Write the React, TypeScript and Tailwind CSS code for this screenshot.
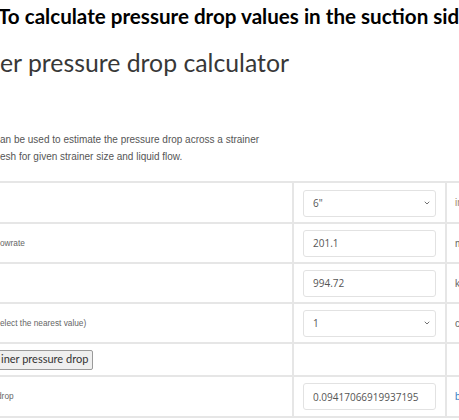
import { ChevronDown } from 'lucide-react';

const inputCls =
    'w-[133px] h-[27px] rounded-[3px] border border-[#e2e2e2] bg-white pl-[9px] text-[10px] text-[#555] font-["Open_Sans",sans-serif] outline-none';

function SelectBox({ value }: { value: string }) {
    return (
        <div className="relative w-[133px]">
            <select
                defaultValue={value}
                className={`${inputCls} appearance-none`}
            >
                <option value={value}>{value}</option>
            </select>
            <ChevronDown
                className="pointer-events-none absolute right-[5px] top-[10px] w-[8px] h-[8px] text-[#555]"
                strokeWidth={2.5}
            />
        </div>
    );
}

function TextBox({ value }: { value: string }) {
    return <input type="text" defaultValue={value} className={inputCls} />;
}

const rows = [
    { h: 'h-[41px]', label: '', labelCls: '', field: <SelectBox value={'6"'} />, unit: 'inch', unitCls: 'text-[#a08a6c]' },
    { h: 'h-[40px]', label: 'owrate', labelCls: '', field: <TextBox value="201.1" />, unit: 'm3/h', unitCls: 'text-[#666]' },
    { h: 'h-[40px]', label: '', labelCls: '', field: <TextBox value="994.72" />, unit: 'kg/m3', unitCls: 'text-[#666]' },
    { h: 'h-[40px]', label: 'elect the nearest value)', labelCls: '', field: <SelectBox value="1" />, unit: 'custom', unitCls: 'text-[#666]' },
    { h: 'h-[33px]', label: null, labelCls: '', field: null, unit: '', unitCls: '' },
    { h: 'h-[41px]', label: 'drop', labelCls: '-ml-[3px]', field: <TextBox value="0.09417066919937195" />, unit: 'bar', unitCls: 'text-[#3b7fc4]' },
];

export default function App() {
    return (
        <div className="w-[459px] h-[420px] overflow-hidden bg-white">
            {/* Intro line */}
            <p className="-ml-[2px] pt-[2px] whitespace-nowrap text-[20.6px] leading-[28px] font-bold text-black font-['Lato',sans-serif]">
                To calculate pressure drop values in the suction side of pump
            </p>

            {/* Title */}
            <h1 className="mt-[18px] whitespace-nowrap text-[24.8px] leading-[30px] text-[#383838] font-['Lato',sans-serif]">
                er pressure drop calculator
            </h1>

            {/* Description */}
            <div className="mt-[53px] text-[10px] leading-[17px] text-[#555] font-['Liberation_Sans',Arial,sans-serif] whitespace-nowrap">
                <p>an be used to estimate the pressure drop across a strainer</p>
                <p>esh for given strainer size and liquid flow.</p>
            </div>

            {/* Calculator table */}
            <div className="mt-[16px] border-t-2 border-[#e6e6e6]">
                {rows.map((row, i) => (
                    <div
                        key={i}
                        className={`grid grid-cols-[294px_153px_1fr] border-b-2 border-[#e6e6e6] ${row.h}`}
                    >
                        <div className="flex items-center border-r-2 border-[#e6e6e6] whitespace-nowrap overflow-hidden">
                            {row.label === null ? (
                                <button className="-ml-[8px] h-[20px] pl-[8px] pr-[4px] rounded-[2px] border border-[#9a9a9a] bg-[#efefef] text-[11px] text-[#333] font-['Lato',sans-serif]">
                                    iner pressure drop
                                </button>
                            ) : (
                                <span className={`text-[8.3px] text-[#666] font-['Liberation_Sans',Arial,sans-serif] ${row.labelCls}`}>
                                    {row.label}
                                </span>
                            )}
                        </div>
                        <div className="flex items-center pl-[9px] border-r-2 border-[#e6e6e6]">
                            {row.field}
                        </div>
                        <div className={`flex items-center pl-[8px] whitespace-nowrap text-[10px] font-['Liberation_Sans',Arial,sans-serif] ${row.unitCls}`}>
                            {row.unit}
                        </div>
                    </div>
                ))}
            </div>
        </div>
    );
}
